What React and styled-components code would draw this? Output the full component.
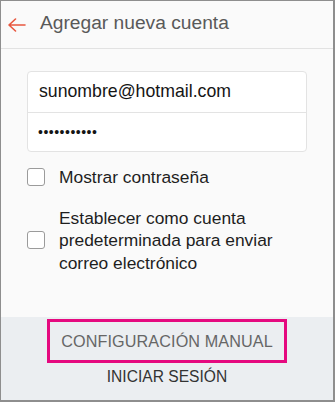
import styled, { createGlobalStyle } from 'styled-components';

const GlobalStyle = createGlobalStyle`
	html, body {
		margin: 0;
		padding: 0;
		background: #ffffff;
	}
	* {
		box-sizing: border-box;
	}
`;

const BackArrow = () => (
	<svg width="18" height="14" viewBox="0 0 18 14" fill="none">
		<path
			d="M1 7 H17 M7.5 1 L1 7 L7.5 13"
			stroke="#e8573f"
			strokeWidth="1.6"
			strokeLinecap="round"
			strokeLinejoin="round"
		/>
	</svg>
);

const OPTIONS = [
	{ id: 'show', label: 'Mostrar contraseña' },
	{
		id: 'default',
		label: 'Establecer como cuenta predeterminada para enviar correo electrónico',
	},
];

export default function App() {
	return (
		<>
			<GlobalStyle />
			<Screen>
				<Header>
					<BackButton>
						<BackArrow />
					</BackButton>
					<Title>Agregar nueva cuenta</Title>
				</Header>
				<Content>
					<FieldGroup>
						<Field>sunombre@hotmail.com</Field>
						<Field $dots>•••••••••••</Field>
					</FieldGroup>
					<Options>
						{OPTIONS.map((option) => (
							<OptionRow key={option.id}>
								<CheckBox />
								<OptionLabel>{option.label}</OptionLabel>
							</OptionRow>
						))}
					</Options>
				</Content>
				<Footer>
					<ManualButton>CONFIGURACIÓN MANUAL</ManualButton>
					<SignIn>INICIAR SESIÓN</SignIn>
				</Footer>
			</Screen>
		</>
	);
}

const Screen = styled.div`
	width: 335px;
	height: 402px;
	display: flex;
	flex-direction: column;
	background-color: #fafafa;
	border-style: solid;
	border-color: #8e8e8e;
	border-width: 1px 2px 2px 1px;
	font-family: 'Liberation Sans', Arial, sans-serif;
	overflow: hidden;
`;

const Header = styled.div`
	display: flex;
	align-items: center;
	height: 48px;
	flex-shrink: 0;
	border-bottom: 1px solid #e2e2e2;
`;

const BackButton = styled.div`
	display: flex;
	width: 39px;
	padding-left: 7px;
	padding-top: 1px;
`;

const Title = styled.h1`
	margin: 0;
	font-size: 19.2px;
	font-weight: normal;
	color: #595959;
	padding-bottom: 3px;
`;

const Content = styled.div`
	flex: 1;
	padding: 22px 26px 0 26px;
`;

const FieldGroup = styled.div`
	display: flex;
	flex-direction: column;
	background-color: #ffffff;
	border: 1px solid #e3e3e3;
	border-radius: 4px;
`;

const Field = styled.div`
	height: 39.5px;
	display: flex;
	align-items: center;
	padding: ${({ $dots }) => ($dots ? '0 11px 0 10px' : '0 11px')};
	font-size: ${({ $dots }) => ($dots ? '14px' : '17.7px')};
	letter-spacing: ${({ $dots }) => ($dots ? '0.5px' : '0')};
	color: #151515;

	& + & {
		border-top: 1px solid #e3e3e3;
	}
`;

const Options = styled.div`
	display: flex;
	flex-direction: column;
	gap: 18px;
	padding-top: 14px;
`;

const OptionRow = styled.label`
	display: flex;
	align-items: center;
	gap: 14px;
`;

const CheckBox = styled.span`
	width: 18px;
	height: 18px;
	flex-shrink: 0;
	border: 1.5px solid #9b9b9b;
	border-radius: 3px;
	background-color: #ffffff;
`;

const OptionLabel = styled.span`
	font-size: 17.4px;
	line-height: 22.5px;
	color: #1e1e1e;
`;

const Footer = styled.div`
	display: flex;
	flex-direction: column;
	align-items: center;
	height: 83px;
	flex-shrink: 0;
	padding-top: 2px;
	background-color: #ebeef1;
`;

const ManualButton = styled.div`
	width: 240px;
	height: 44px;
	display: flex;
	align-items: center;
	justify-content: center;
	border: 3px solid #e5097f;
	font-size: 16.2px;
	color: #666666;
	letter-spacing: 0.1px;
`;

const SignIn = styled.div`
	margin-top: 4px;
	font-size: 15.6px;
	line-height: 20px;
	color: #333333;
`;
